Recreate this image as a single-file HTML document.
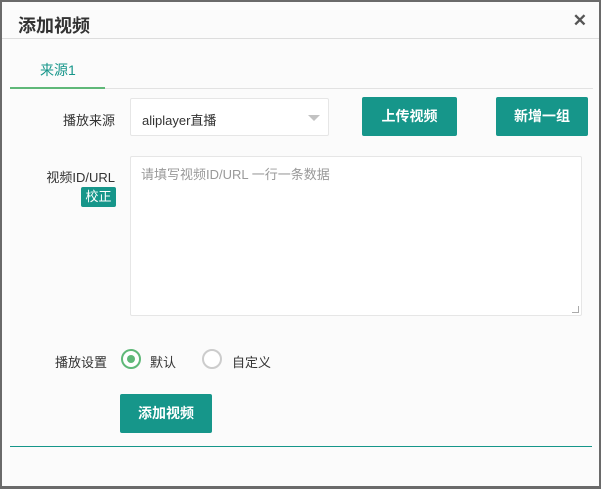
<!DOCTYPE html>
<html><head><meta charset="utf-8"><style>
*{margin:0;padding:0;box-sizing:border-box}
html,body{width:601px;height:489px;overflow:hidden;background:#6a6a6a}
body{font-family:"Liberation Sans","Noto Sans CJK SC",sans-serif;font-size:13px;color:#333;position:relative}
.dlg{position:absolute;left:2px;top:2px;width:597px;height:484px;background:#fbfbfb}
.a{position:absolute}
.btn{position:absolute;background:#16968a;color:#fff;border-radius:2px;text-align:center;font-size:14px;font-weight:bold}
.lbl{position:absolute;text-align:right;width:80px;font-size:13px;color:#333}
.radio{position:absolute;width:20px;height:20px;border-radius:50%;border:2px solid #ccc;background:#fff}
</style></head><body>
<div class="dlg">
<div class="a" style="left:16px;top:10px;font-size:18px;font-weight:bold;color:#333">添加视频</div>
<div class="a" style="right:12px;top:9px;font-size:17px;font-weight:bold;color:#555">✕</div>
<div class="a" style="left:0;top:36px;width:597px;height:1px;background:#ddd"></div>
<div class="a" style="left:38px;top:58px;font-size:14px;color:#16968a">来源1</div>
<div class="a" style="left:103px;top:86px;width:488px;height:1px;background:#e2e2e2"></div>
<div class="a" style="left:8px;top:85px;width:95px;height:2px;background:#5fb878"></div>

<div class="lbl" style="left:33px;top:108px">播放来源</div>
<div class="a" style="left:128px;top:96px;width:199px;height:38px;border:1px solid #e6e6e6;background:#fff;border-radius:2px"></div>
<div class="a" style="left:140px;top:108px;font-size:13px;color:#333">aliplayer直播</div>
<div class="a" style="left:306px;top:113px;width:0;height:0;border-left:6px solid transparent;border-right:6px solid transparent;border-top:6px solid #c2c2c2"></div>
<div class="btn" style="left:360px;top:95px;width:95px;height:39px;line-height:39px">上传视频</div>
<div class="btn" style="left:494px;top:95px;width:92px;height:39px;line-height:39px">新增一组</div>

<div class="lbl" style="left:33px;top:165px">视频ID/URL</div>
<div class="a" style="left:79px;top:185px;width:35px;height:20px;background:#16968a;color:#fff;border-radius:2px;text-align:center;line-height:20px;font-size:13px">校正</div>
<div class="a" style="left:128px;top:154px;width:452px;height:160px;border:1px solid #e6e6e6;background:#fff;border-radius:2px"></div>
<div class="a" style="left:139px;top:162px;font-size:13px;color:#999">请填写视频ID/URL 一行一条数据</div>
<div class="a" style="left:570px;top:304px;width:7px;height:7px;border-right:1px solid #aaa;border-bottom:1px solid #aaa"></div>

<div class="lbl" style="left:25px;top:350px">播放设置</div>
<div class="radio" style="left:119px;top:347px;border-color:#5fb878"><div style="position:absolute;left:4px;top:4px;width:8px;height:8px;border-radius:50%;background:#5fb878"></div></div>
<div class="a" style="left:148px;top:350px">默认</div>
<div class="radio" style="left:200px;top:347px"></div>
<div class="a" style="left:230px;top:350px">自定义</div>

<div class="btn" style="left:118px;top:392px;width:92px;height:39px;line-height:39px">添加视频</div>
<div class="a" style="left:8px;top:444px;width:582px;height:1px;background:#16968a"></div>
</div>
</body></html>
